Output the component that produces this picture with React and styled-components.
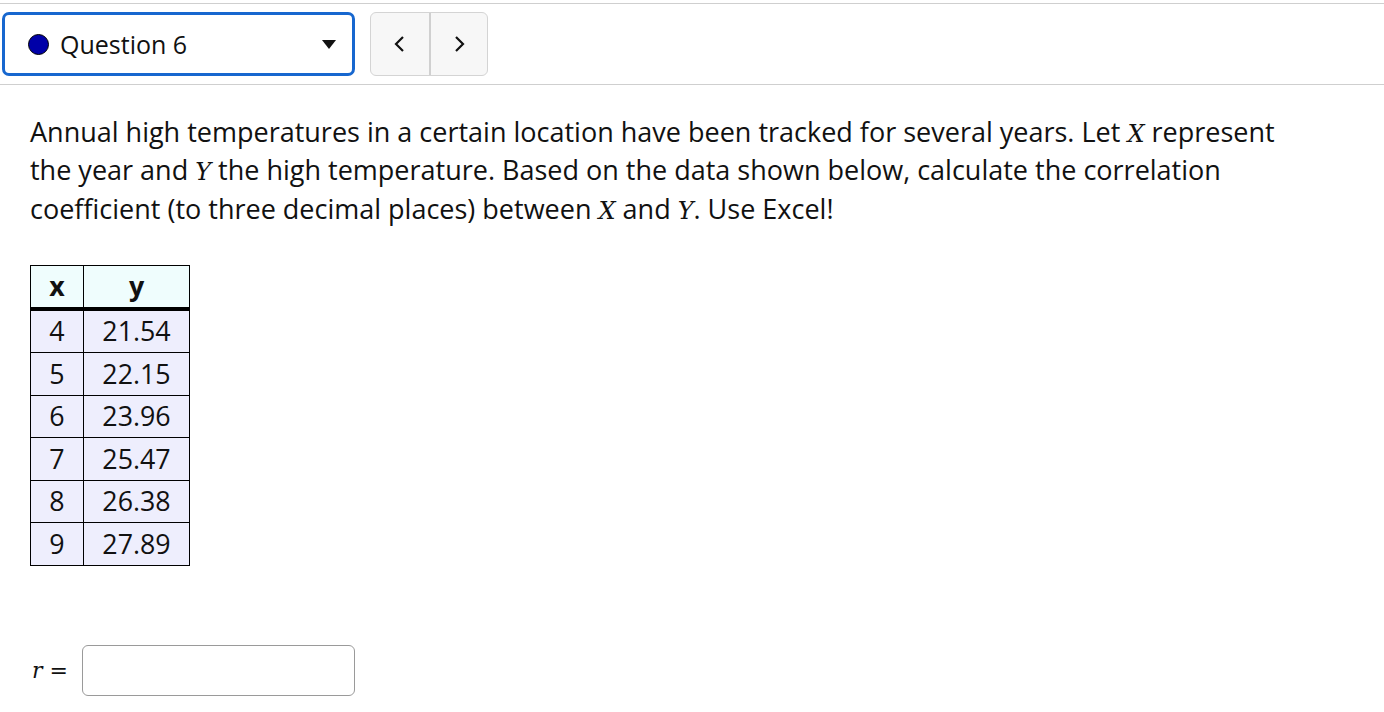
import React from "react";
import styled, { createGlobalStyle } from "styled-components";

const Global = createGlobalStyle`
  html, body { margin: 0; padding: 0; background: #fff; }
  body { font-family: "Open Sans", "Noto Sans", sans-serif; color: #111; }
`;

const Page = styled.div`
  padding-top: 3px;
`;

const Toolbar = styled.div`
  border-top: 1px solid #cfcfcf;
  border-bottom: 1px solid #cfcfcf;
  padding: 8px 0 8px 2px;
  display: flex;
  align-items: center;
  gap: 15px;
`;

const Select = styled.div`
  box-sizing: border-box;
  width: 353px;
  height: 64px;
  border: 3px solid #1767cf;
  border-radius: 7px;
  display: flex;
  align-items: center;
  padding: 0 16px 0 23px;
  font-size: 25px;
`;

const Dot = styled.span`
  width: 19px;
  height: 19px;
  border-radius: 50%;
  background: #0000a8;
  border: 1.5px solid #000;
  margin-right: 11px;
  flex: none;
`;

const Label = styled.span`
  flex: 1;
`;

const Caret = styled.span`
  width: 0;
  height: 0;
  border-left: 7px solid transparent;
  border-right: 7px solid transparent;
  border-top: 9px solid #111;
`;

const NavGroup = styled.div`
  display: flex;
  height: 64px;
  box-sizing: border-box;
  border: 1px solid #d4d4d4;
  border-radius: 6px;
  background: #f7f7f7;
  overflow: hidden;
`;

const NavButton = styled.button`
  width: 58px;
  border: none;
  background: transparent;
  display: flex;
  align-items: center;
  justify-content: center;
  padding: 0;
  & + & { border-left: 2px solid #d0d0d0; }
`;

const Content = styled.div`
  padding: 28px 30px 0 30px;
`;

const Para = styled.p`
  margin: 0;
  font-size: 27px;
  line-height: 38.3px;
  max-width: 1275px;
`;

const M = styled.span`
  font-family: "DejaVu Serif", "Liberation Serif", serif;
  font-style: italic;
  font-size: 24px;
  line-height: 1;
`;

const Table = styled.table`
  margin-top: 37px;
  border-collapse: collapse;
  font-size: 26.8px;
`;

const Th = styled.th`
  border: 1px solid #000;
  border-bottom: 4px solid #000;
  background: #effdfd;
  height: 41px;
  padding: 0;
  width: ${(p) => p.$w}px;
  font-weight: 700;
  text-align: center;
  line-height: 1;
`;

const Td = styled.td`
  border: 1px solid #000;
  background: #eeeefd;
  height: 41.5px;
  padding: 0;
  text-align: center;
  line-height: 1;
`;

const Answer = styled.div`
  margin-top: 79px;
  display: flex;
  align-items: center;
`;

const RLabel = styled.span`
  font-family: "DejaVu Serif", "Liberation Serif", serif;
  font-size: 22px;
  width: 50px;
  padding-left: 2px;
  & i { font-style: italic; }
`;

const Input = styled.div`
  box-sizing: border-box;
  width: 273px;
  height: 51px;
  border: 1px solid #9a9a9a;
  border-radius: 6px;
`;

const rows = [
  [4, "21.54"],
  [5, "22.15"],
  [6, "23.96"],
  [7, "25.47"],
  [8, "26.38"],
  [9, "27.89"],
];

const Chevron = ({ dir }) => (
  <svg width="14" height="18" viewBox="0 0 14 18">
    <path
      d={dir === "left" ? "M10 2 L3 9 L10 16" : "M4 2 L11 9 L4 16"}
      fill="none"
      stroke="#111"
      strokeWidth="2.2"
    />
  </svg>
);

export default function App() {
  return (
    <Page>
      <Global />
      <Toolbar>
        <Select>
          <Dot />
          <Label>Question 6</Label>
          <Caret />
        </Select>
        <NavGroup>
          <NavButton aria-label="previous"><Chevron dir="left" /></NavButton>
          <NavButton aria-label="next"><Chevron dir="right" /></NavButton>
        </NavGroup>
      </Toolbar>
      <Content>
        <Para>
          Annual high temperatures in a certain location have been tracked for several years. Let <M>X</M> represent
          the year and <M>Y</M> the high temperature. Based on the data shown below, calculate the correlation
          coefficient (to three decimal places) between <M>X</M> and <M>Y</M>. Use Excel!
        </Para>
        <Table>
          <thead>
            <tr>
              <Th $w={52}>x</Th>
              <Th $w={105}>y</Th>
            </tr>
          </thead>
          <tbody>
            {rows.map(([x, y]) => (
              <tr key={x}>
                <Td>{x}</Td>
                <Td>{y}</Td>
              </tr>
            ))}
          </tbody>
        </Table>
        <Answer>
          <RLabel><i>r</i> =</RLabel>
          <Input />
        </Answer>
      </Content>
    </Page>
  );
}
